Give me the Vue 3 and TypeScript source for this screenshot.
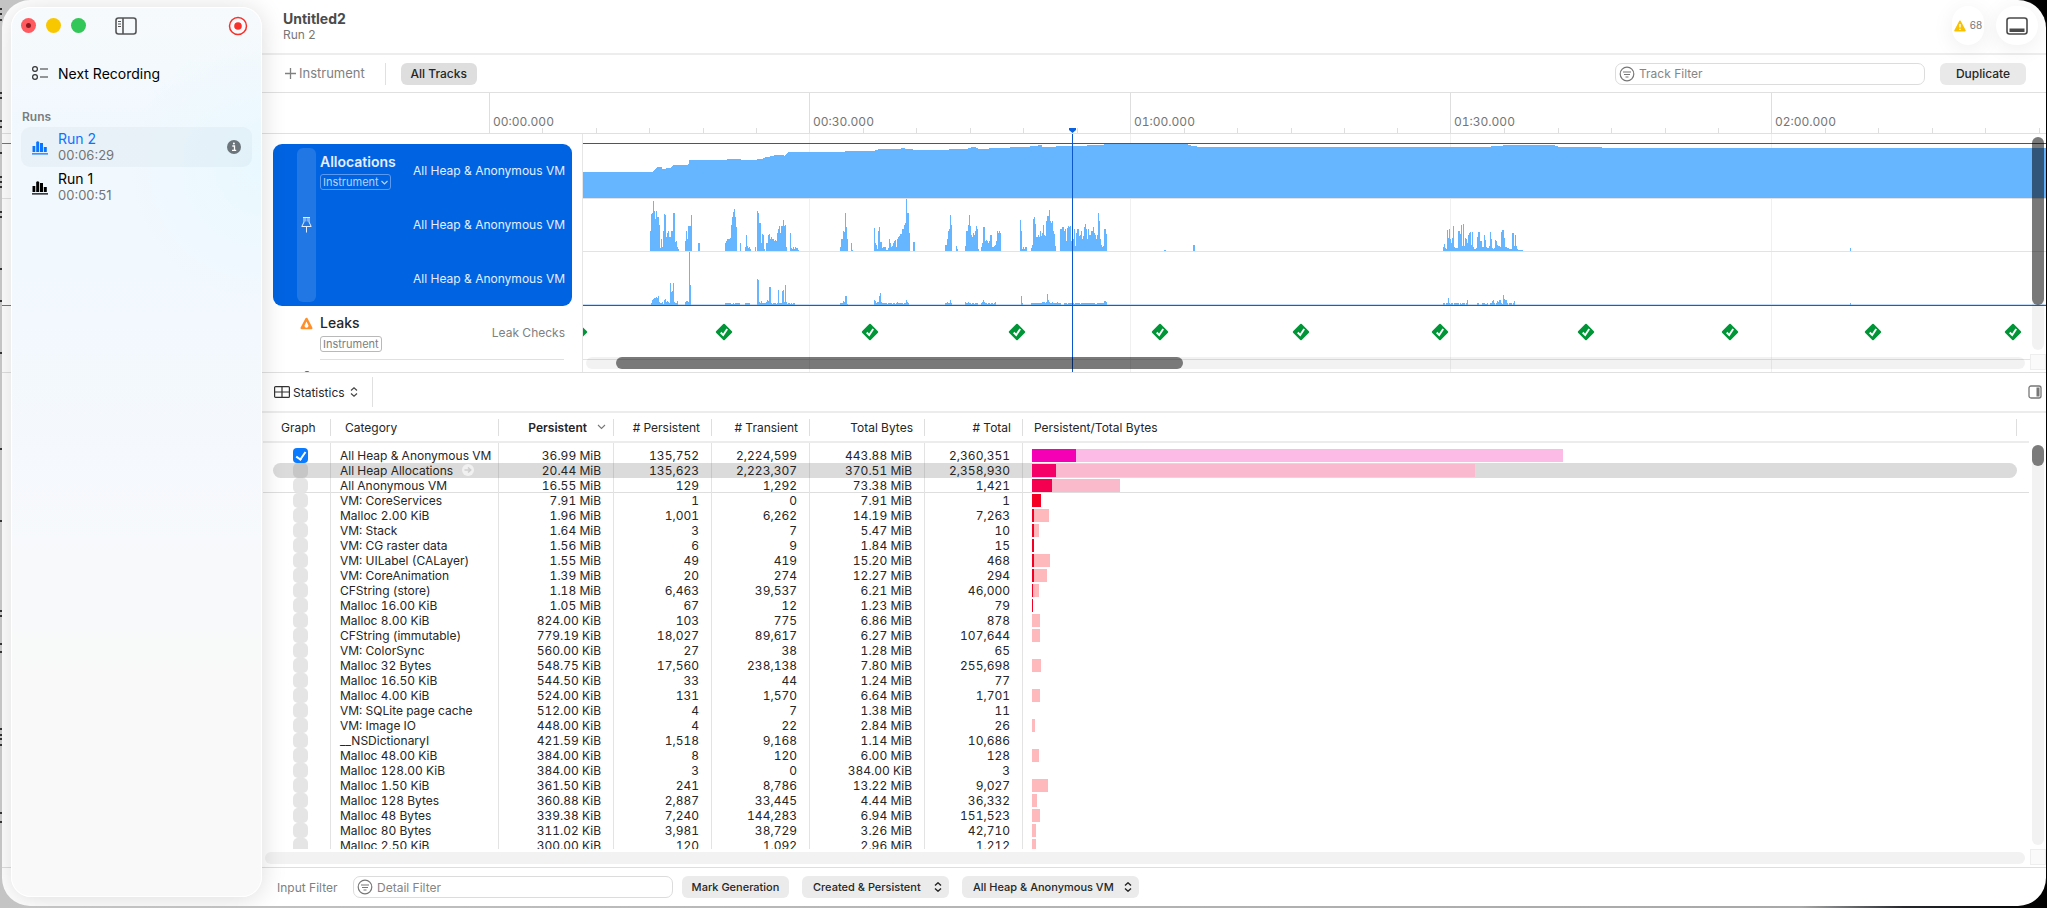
<script setup lang="ts">
import { ref } from 'vue'

interface Run { id: number; name: string; time: string }
interface Row {
  name: string
  persistent: string
  nPersistent: string
  nTransient: string
  total: string
  nTotal: string
}
type Burst = [number, number[]]

const runs: Run[] = [
  { id: 2, name: 'Run 2', time: '00:06:29' },
  { id: 1, name: 'Run 1', time: '00:00:51' },
]
const activeRun = ref(2)
const trackFilter = ref('')
const detailFilter = ref('')
const selectedRow = ref(1)

const source = `All Heap & Anonymous VM|36.99 MiB|135,752|2,224,599|443.88 MiB|2,360,351
All Heap Allocations|20.44 MiB|135,623|2,223,307|370.51 MiB|2,358,930
All Anonymous VM|16.55 MiB|129|1,292|73.38 MiB|1,421
VM: CoreServices|7.91 MiB|1|0|7.91 MiB|1
Malloc 2.00 KiB|1.96 MiB|1,001|6,262|14.19 MiB|7,263
VM: Stack|1.64 MiB|3|7|5.47 MiB|10
VM: CG raster data|1.56 MiB|6|9|1.84 MiB|15
VM: UILabel (CALayer)|1.55 MiB|49|419|15.20 MiB|468
VM: CoreAnimation|1.39 MiB|20|274|12.27 MiB|294
CFString (store)|1.18 MiB|6,463|39,537|6.21 MiB|46,000
Malloc 16.00 KiB|1.05 MiB|67|12|1.23 MiB|79
Malloc 8.00 KiB|824.00 KiB|103|775|6.86 MiB|878
CFString (immutable)|779.19 KiB|18,027|89,617|6.27 MiB|107,644
VM: ColorSync|560.00 KiB|27|38|1.28 MiB|65
Malloc 32 Bytes|548.75 KiB|17,560|238,138|7.80 MiB|255,698
Malloc 16.50 KiB|544.50 KiB|33|44|1.24 MiB|77
Malloc 4.00 KiB|524.00 KiB|131|1,570|6.64 MiB|1,701
VM: SQLite page cache|512.00 KiB|4|7|1.38 MiB|11
VM: Image IO|448.00 KiB|4|22|2.84 MiB|26
__NSDictionaryI|421.59 KiB|1,518|9,168|1.14 MiB|10,686
Malloc 48.00 KiB|384.00 KiB|8|120|6.00 MiB|128
Malloc 128.00 KiB|384.00 KiB|3|0|384.00 KiB|3
Malloc 1.50 KiB|361.50 KiB|241|8,786|13.22 MiB|9,027
Malloc 128 Bytes|360.88 KiB|2,887|33,445|4.44 MiB|36,332
Malloc 48 Bytes|339.38 KiB|7,240|144,283|6.94 MiB|151,523
Malloc 80 Bytes|311.02 KiB|3,981|38,729|3.26 MiB|42,710
Malloc 2.50 KiB|300.00 KiB|120|1,092|2.96 MiB|1,212`

const rows: Row[] = source.split('\n').map((line) => {
  const [name, persistent, nPersistent, nTransient, total, nTotal] = line.split('|')
  return { name, persistent, nPersistent, nTransient, total, nTotal }
})

function mib(text: string): number {
  const value = parseFloat(text)
  return text.endsWith('KiB') ? value / 1024 : value
}

/* Share of the bar column taken by an amount; slivers are dropped. */
function barWidth(text: string, floor: number): string {
  const value = mib(text)
  return value < floor ? '0' : `${(value * 0.1215).toFixed(3)}%`
}

/* Timeline */
const span = 320.6
const majors = ['00:00.000', '00:30.000', '01:00.000', '01:30.000', '02:00.000'].map((label, i) => ({
  label,
  x: Math.floor(487 + span * i),
}))
const minors = Array.from({ length: 29 }, (_, i) => i + 1)
  .filter((i) => i % 6 !== 0)
  .map((i) => Math.round(487 + (span / 6) * i))

const heap =
  'M-1 64V38H68L70 36L74 33H78V35L86 34L89 31H104V30H105V26H143V25H157V26H173V25H178L182 23L190 22V21H200V22L204 18H261V17H290L295 15H317V14H321V15H329V16H365V15H382L389 13H391L395 15L414 14L438 13H446V12H454V11H458V13L486 12L520 11V10H604V11L616 13H907V12H919V11H971V12L977 13H1018V14H1600V64Z'

const density: Burst[] = [
  [66, [20, 37, 38, 50, 40, 32, 40, 34, 34, 26, 3, 12, 4, 20, 37, 36, 14, 18, 20, 14, 14, 20, 20, 38, 38, 9, 10, 4, 2]],
  [101, [10, 20, 12, 25, 25, 25, 36]],
  [114, [8, 8]],
  [141, [8, 10, 12, 12, 12, 13, 26, 34, 39, 42, 34, 24]],
  [156, [8]],
  [161, [4, 16, 5, 3, 4, 2]],
  [171, [4]],
  [173, [40, 38, 28, 28, 8, 17, 16, 2]],
  [182, [8, 8, 16, 17, 12, 14, 12, 12, 10, 11, 10, 18, 22, 25, 18, 25, 25, 31, 25, 26, 4]],
  [206, [18, 3, 2, 4, 2, 4, 3, 3, 1]],
  [256, [4, 12, 12, 20, 19, 38, 24, 12]],
  [267, [8, 1]],
  [290, [23, 8, 6, 2, 20, 24, 9, 9, 3, 4, 4, 4, 1, 1, 3, 12, 8, 4, 5, 8, 10, 11, 4, 12, 14, 15, 17, 17, 22, 22, 26, 28, 52, 38, 38, 18]],
  [329, [9, 9]],
  [361, [6, 6, 12, 20, 22, 36, 26]],
  [372, [5, 2]],
  [381, [5, 20, 20, 26, 36, 25, 16, 14, 18, 16, 20, 25, 22, 2]],
  [397, [4, 8, 24, 24, 10, 11, 10, 8, 10, 16, 16, 4, 4, 5, 6, 10, 20, 18, 20, 18]],
  [436, [31, 20, 2, 4, 2, 4, 4]],
  [447, [3, 6, 32, 34, 27, 14, 14, 16, 14, 20, 15, 18, 26, 16, 15, 30, 35, 35, 41, 30, 28, 30, 20, 17, 5]],
  [476, [22, 22, 24, 24, 20, 22, 10, 23, 25, 24, 25, 10, 10, 12, 22, 5, 18, 22, 22, 15, 16, 20, 12, 15, 24, 27, 22, 12, 22, 16, 16, 20, 20, 24, 18, 16, 12, 16, 38, 30, 12, 6, 4, 5, 22, 22, 17]],
  [580, [1, 1]],
  [609, [6, 6]],
  [859, [4, 7, 3, 2, 21, 13, 22, 12, 8, 13, 25, 4, 3, 3, 3, 20, 20, 17, 26, 5, 27, 5, 13, 12, 8, 16, 18, 19, 6, 19, 4, 2, 2, 3, 14, 19, 19, 10, 10, 4, 4, 16, 11, 4, 3, 3, 5, 19, 12, 3, 2, 3, 11, 10, 6, 5, 5, 4, 19, 21, 21, 13, 4, 4, 3, 3, 2, 2, 2, 18, 18, 5, 16, 5, 2, 1, 1, 1, 1, 1]],
  [1266, [3]],
]
const growth: Burst[] = [
  [67, [2, 5, 6, 7, 7, 8, 7, 9, 3, 2, 2, 3, 1, 5, 6, 3, 4, 3, 2, 22, 13, 14, 22, 3, 2, 2, 4]],
  [101, [3, 4, 4, 3]],
  [105, [53, 20]],
  [141, [2, 2, 2, 2, 2, 2, 1, 1, 2, 1, 2, 2, 2, 2, 2]],
  [161, [2, 2, 2, 2, 2]],
  [173, [26, 25, 3, 2, 4, 2, 2, 2, 2, 3, 5, 4, 18, 18, 2, 1, 2, 2, 2, 1, 2, 15, 2, 2, 2, 14, 15, 3, 20, 3, 1, 2, 2, 1, 2, 1, 2, 2]],
  [256, [2, 2, 2, 4, 3, 9, 9, 1]],
  [290, [5, 4, 2, 3, 3, 9, 12, 3, 2, 2, 2, 2, 2, 1, 2, 2, 2, 2, 1, 2, 2, 1, 2, 3, 2, 2, 2, 2, 2, 1, 2, 2, 5, 3, 2]],
  [361, [2, 2, 3, 2, 2, 5, 2]],
  [381, [3, 2, 2, 3, 2, 2, 1, 2, 2, 1, 2, 2, 2]],
  [397, [2, 3, 5, 3, 2, 2, 1, 2, 2, 1, 2, 2, 1, 2, 3]],
  [437, [9, 2]],
  [447, [2, 2, 2, 2, 2, 2, 2, 2, 2, 2, 2, 3, 3, 3, 2, 3, 11, 5, 3, 2, 2, 3, 2, 2, 2, 2, 3, 2, 2, 2]],
  [480, [2, 2, 2, 1, 2, 2, 2, 2, 2, 2, 1, 2, 2, 2, 2, 2, 1, 2, 2, 2, 2, 2, 2, 2, 2, 2, 2, 2, 2, 2, 2, 1, 1, 2, 2, 2, 2, 2, 2, 2, 4, 4, 3]],
  [859, [2, 2, 0, 2, 2, 7, 2, 1, 2, 2, 0, 2, 2, 2, 2, 2, 0, 2, 1, 2, 2, 2, 0, 2, 5]],
  [893, [2, 2, 0, 0, 0, 2, 2, 2, 1, 1, 2, 0, 0, 2, 2, 4, 5, 2, 0, 2, 4, 3, 5, 5, 2, 1, 10, 6, 5, 5, 2, 0, 2, 2, 2, 0, 2, 4]],
  [1266, [2]],
]

function spikes(bursts: Burst[], base: number): string {
  return bursts
    .map(([x, hs]) => `M${x} ${base}` + hs.map((h) => `V${base - h}h1`).join('') + `V${base}Z`)
    .join('')
}
const densityPath = spikes(density, 117)
const growthPath = spikes(growth, 171)
const leakChecks = [-5, 140, 286, 433, 576, 717, 856, 1002, 1146, 1289, 1429]

const edgeMarks = [8, 13, 19, 92, 97, 120, 126, 152, 176, 181, 186, 211, 216, 268, 300, 352, 448, 520, 610, 615, 643, 651, 728, 734, 738, 744, 812, 821]
</script>

<template>
  <div class="desktop">
    <svg class="edge" aria-hidden="true"><rect v-for="y in edgeMarks" :key="y" x="0" :y="y" width="2" height="2" /></svg>
    <div class="window">
      <aside class="sidebar">
        <div class="chrome">
          <button class="light red" aria-label="Close"><i></i></button>
          <button class="light yellow" aria-label="Minimize"></button>
          <button class="light green" aria-label="Zoom"></button>
          <button class="icon-btn toggle" aria-label="Toggle sidebar">
            <svg width="22" height="18" viewBox="0 0 22 18" fill="none" stroke="#555" stroke-width="1.6">
              <rect x="1" y="1" width="20" height="16" rx="2.5" /><path d="M8 1v16" /><path d="M3 4.500h3M3 7h3M3 9.500h3" stroke-width="1" />
            </svg>
          </button>
          <button class="icon-btn record" aria-label="Record">
            <svg width="20" height="20" viewBox="0 0 20 20"><circle cx="10" cy="10" r="8.500" fill="none" stroke="#f9302a" stroke-width="1.500" /><circle cx="10" cy="10" r="3.800" fill="#f9302a" /></svg>
          </button>
        </div>
        <button class="next">
          <svg width="16" height="16" viewBox="0 0 16 16" fill="none" stroke="#333" stroke-width="1.200"><circle cx="3" cy="4" r="2.400" /><circle cx="3" cy="12" r="2.400" /><path d="M8 4h8M8 12h8" /></svg>
          <span>Next Recording</span>
        </button>
        <h2>Runs</h2>
        <button v-for="run in runs" :key="run.id" class="run" :class="{ active: run.id === activeRun }" @click="activeRun = run.id">
          <svg width="16" height="16" viewBox="0 0 16 16" fill="currentColor"><path d="M.500 7h2.800v6H.500zM4.200 3h3v10h-3zM8 4h3v9H8zM11.800 8h3v5h-3zM4.200 3q1.500-1.700 3 0zM0 14.200h16v1.300H0z" /></svg>
          <span class="run-text"><span class="run-name">{{ run.name }}</span><span class="run-time">{{ run.time }}</span></span>
          <svg v-if="run.id === activeRun" class="info" width="14" height="14" viewBox="0 0 14 14"><circle cx="7" cy="7" r="7" fill="#6b757b" /><path d="M5.300 6h2.200v4.200M5 10.300h4.200" fill="none" stroke="#fff" stroke-width="1.300" /><circle cx="6.900" cy="3.600" r="1" fill="#fff" /></svg>
        </button>
      </aside>

      <header class="titlebar">
        <div class="titles"><h1>Untitled2</h1><p>Run 2</p></div>
        <button class="pill issues" aria-label="68 issues">
          <svg width="12" height="12" viewBox="0 0 12 12"><path d="M6 1.200L11 10.700H1z" fill="#f8c200" stroke="#f8c200" stroke-width="1.500" stroke-linejoin="round" /><path d="M6 4v3.500M6 8.800v1.200" stroke="#fff" stroke-width="1.400" /></svg>
          <span>68</span>
        </button>
        <button class="pill panel" aria-label="Toggle detail area">
          <svg width="22" height="18" viewBox="0 0 22 18"><rect x="1" y="1" width="20" height="16" rx="2.500" fill="none" stroke="#4a4a4a" stroke-width="1.600" /><path d="M3.500 11.500h15v3.500h-15z" fill="#4a4a4a" /></svg>
        </button>
      </header>

      <div class="toolbar">
        <button class="plain"><svg width="11" height="11" viewBox="0 0 11 11" stroke="#808080" stroke-width="1.300"><path d="M5.500 0v11M0 5.500h11" /></svg>Instrument</button>
        <span class="divider"></span>
        <button class="btn tracks-btn">All Tracks</button>
        <label class="search track-search">
          <svg width="16" height="16" viewBox="0 0 16 16" fill="none" stroke="#777" stroke-width="1.200"><circle cx="8" cy="8" r="6.800" /><path d="M4 6h8M5 8.500h6M6.500 11h3" /></svg>
          <input v-model="trackFilter" type="text" placeholder="Track Filter" aria-label="Track Filter" />
        </label>
        <button class="btn duplicate">Duplicate</button>
      </div>

      <div class="ruler">
        <svg width="100%" height="40">
          <g v-for="m in majors" :key="m.label"><rect :x="m.x" y="0" width="1" height="40" fill="#dedede" /><text :x="m.x + 4" y="33">{{ m.label }}</text></g>
          <rect v-for="x in minors" :key="x" :x="x" y="35" width="1" height="5" fill="#dedede" />
          <path d="M1067 35h7v2l-3.500 3l-3.500-3z" fill="#0a62e0" />
        </svg>
      </div>

      <section class="tracks">
        <div class="bleed"></div>
        <div class="track-heads">
          <div class="alloc">
            <button class="pin" aria-label="Pin track">
              <svg width="11" height="16" viewBox="0 0 11 16" fill="none" stroke="#e4eeff" stroke-width="1"><path d="M2 .500h7M3 .500v4.500L.800 9.500h9.400L8 5V.500M5.500 9.500v6" /><path d="M4.700 1v3.500M6.300 1v3.500" stroke-width=".6" /></svg>
            </button>
            <div class="alloc-name"><strong>Allocations</strong>
              <button class="tag">Instrument<svg width="7" height="5" viewBox="0 0 7 5" fill="none" stroke="#b5d3fb" stroke-width="1.200"><path d="M.500 1l3 3l3-3" /></svg></button>
            </div>
            <ul class="lanes"><li v-for="n in 3" :key="n">All Heap &amp; Anonymous VM</li></ul>
          </div>
          <div class="leaks">
            <svg class="leak-icon" width="13" height="13" viewBox="0 0 13 13"><path d="M6.500 2L11.200 11H1.800z" fill="#ff8f2b" stroke="#ff8f2b" stroke-width="2.600" stroke-linejoin="round" /><path d="M6.500 4.500L8.300 8.200a1.900 1.900 0 1 1-3.600 0z" fill="#fff" /></svg>
            <div class="leak-name"><strong>Leaks</strong><span class="tag">Instrument</span></div>
            <span class="leak-label">Leak Checks</span>
          </div>
          <div class="next-track"><i></i></div>
        </div>
        <div class="plot">
          <svg width="100%" height="238" shape-rendering="crispEdges">
            <g fill="#f0f0f0"><rect v-for="m in majors.slice(1)" :key="m.x" :x="m.x - 581" y="0" width="1" height="238" /></g>
            <path :d="heap" transform="translate(1 0)" fill="#66b5ff" />
            <g fill="#e3e3e3"><rect y="64" width="100%" height="1" /><rect y="117" width="100%" height="1" /><rect y="225" width="100%" height="1" /></g>
            <path :d="densityPath" transform="translate(1 0)" fill="#66b5ff" />
            <rect y="9" width="100%" height="1" fill="#0a62d8" />
            <rect y="170" width="100%" height="1" fill="#c3dcf8" />
            <path :d="growthPath" transform="translate(1 0)" fill="#66b5ff" />
            <rect y="171" width="100%" height="1" fill="#0a62d8" />
            <g v-for="x in leakChecks" :key="x" :transform="`translate(${x + 1} 198)`" shape-rendering="auto">
              <path d="M0-7.200L7.200 0L0 7.200L-7.200 0z" fill="#009638" stroke="#009638" stroke-width="2" stroke-linejoin="round" />
              <path d="M-3.300.500L-.800 3L3.200-3" fill="none" stroke="#fff" stroke-width="1.900" />
            </g>
            <rect x="489" y="0" width="1" height="238" fill="#0a58cc" />
          </svg>
          <div class="h-track"><i></i></div>
          <div class="v-track"><i></i></div>
          <div class="corner"></div>
        </div>
      </section>

      <div class="detail-bar">
        <label class="popup stats">
          <svg width="16" height="12" viewBox="0 0 16 12" fill="none" stroke="#333" stroke-width="1.200"><rect x=".600" y=".600" width="14.800" height="10.800" rx="1" /><path d="M8 1v10M1 6h14" /></svg>
          <select aria-label="Detail view"><option>Statistics</option></select>
          <svg class="chev" width="8" height="10" viewBox="0 0 8 10" fill="none" stroke="#444" stroke-width="1.200"><path d="M1 3.500L4 .800L7 3.500M1 6.500L4 9.200L7 6.500" /></svg>
        </label>
        <span class="divider"></span>
        <button class="icon-btn inspector" aria-label="Toggle inspector">
          <svg width="14" height="14" viewBox="0 0 14 14"><rect x="1" y="1" width="12" height="12" rx="2" fill="none" stroke="#777" stroke-width="1.300" /><rect x="8.500" y="2.500" width="3" height="9" fill="#777" /></svg>
        </button>
      </div>

      <div class="detail">
        <div class="grid-clip">
          <table>
            <colgroup><col class="c10" /><col class="c58" /><col class="c168" /><col class="c115" /><col class="c98" /><col class="c98" /><col class="c115" /><col class="c98" /><col /><col class="c12" /></colgroup>
            <thead>
              <tr>
                <td></td><th class="g">Graph</th><th class="l cat">Category</th>
                <th class="sorted">Persistent<svg width="9" height="6" viewBox="0 0 9 6" fill="none" stroke="#777" stroke-width="1.100"><path d="M1 1l3.500 3.500L8 1" /></svg></th>
                <th># Persistent</th><th># Transient</th><th>Total Bytes</th><th># Total</th><th class="l bars">Persistent/Total Bytes</th><td></td>
              </tr>
            </thead>
            <tbody>
              <tr class="pad" aria-hidden="true"><td v-for="n in 10" :key="n"></td></tr>
              <tr v-for="(row, i) in rows" :key="row.name" :class="{ selected: i === selectedRow, last: i === 2 }" @click="selectedRow = i">
                <td></td>
                <td class="g"><input type="checkbox" :checked="i === 0" :aria-label="`Graph ${row.name}`" /></td>
                <td class="l">{{ row.name }}<svg v-if="i === selectedRow" class="go" width="12" height="12" viewBox="0 0 12 12"><circle cx="6" cy="6" r="6" fill="#f1f1f1" /><path d="M2.500 6h6M6 3.500L8.700 6L6 8.500" fill="none" stroke="#cfcfcf" stroke-width="1.600" /></svg></td>
                <td>{{ row.persistent }}</td><td>{{ row.nPersistent }}</td><td>{{ row.nTransient }}</td><td>{{ row.total }}</td><td>{{ row.nTotal }}</td>
                <td class="barcell"><div class="bar" :class="`hue${Math.min(i, 3)}`"><span class="all" :style="{ width: barWidth(row.total, 1.5) }"></span><span class="live" :style="{ width: barWidth(row.persistent, 1) }"></span></div></td>
                <td></td>
              </tr>
            </tbody>
          </table>
        </div>
        <div class="h-scroll"></div>
        <div class="v-scroll"><i></i></div>
        <div class="corner"></div>
      </div>

      <footer>
        <label for="detail-filter">Input Filter</label>
        <div class="search detail-search">
          <svg width="16" height="16" viewBox="0 0 16 16" fill="none" stroke="#777" stroke-width="1.200"><circle cx="8" cy="8" r="6.800" /><path d="M4 6h8M5 8.500h6M6.500 11h3" /></svg>
          <input id="detail-filter" v-model="detailFilter" type="text" placeholder="Detail Filter" />
        </div>
        <button class="btn mark">Mark Generation</button>
        <label class="popup boxed"><select aria-label="Lifespan"><option>Created &amp; Persistent</option></select>
          <svg class="chev" width="8" height="10" viewBox="0 0 8 10" fill="none" stroke="#222" stroke-width="1.400"><path d="M1 3.500L4 .800L7 3.500M1 6.500L4 9.200L7 6.500" /></svg></label>
        <label class="popup boxed wide"><select aria-label="Allocation type"><option>All Heap &amp; Anonymous VM</option></select>
          <svg class="chev" width="8" height="10" viewBox="0 0 8 10" fill="none" stroke="#222" stroke-width="1.400"><path d="M1 3.500L4 .800L7 3.500M1 6.500L4 9.200L7 6.500" /></svg></label>
      </footer>
    </div>
  </div>
</template>

<style>
body { margin: 0; }
</style>

<style scoped>
* { box-sizing: border-box; }
.desktop {
  position: relative; height: 100vh; padding: 0 1px 2px 2px; overflow: hidden;
  background: linear-gradient(90deg, #c4c4c4, #a8a8a8 88%, #26282c 93%, #000);
  font: 12px/15px Inter, "Liberation Sans", sans-serif; color: #262626;
}
.edge { position: absolute; left: 0; top: 0; width: 2px; height: 100%; fill: #333; }
.window {
  position: relative; height: 100%; display: flex; flex-direction: column;
  background: #fff; border-radius: 28px; overflow: hidden;
}
button, select, input { font: inherit; color: inherit; margin: 0; padding: 0; border: 0; background: none; outline: none; }
h1, h2, p, ul { margin: 0; padding: 0; }
svg { display: block; flex: none; }

.sidebar {
  position: absolute; z-index: 3; left: 9px; top: 7px; bottom: 9px; width: 251px; padding: 0 9px;
  border-radius: 20px; border: 1px solid #fff;
  background: radial-gradient(circle at 100% 18%, #e9f8ff 0, transparent 130px), linear-gradient(180deg, #f6fafc 0, #f1f8fe 14%, #f2f8fe 35%, #f7f9fc 60%, #f9f9f9 75%);
  box-shadow: 0 2px 26px rgba(0, 0, 0, .14);
}
.chrome { display: flex; align-items: center; height: 35px; }
.light { width: 15px; height: 15px; border-radius: 50%; margin-right: 10px; display: grid; place-items: center; }
.light.red { background: #ff5a5f; }
.light.red i { width: 5px; height: 5px; border-radius: 50%; background: #8b1a1f; }
.light.yellow { background: #f9c700; }
.light.green { background: #33c658; }
.toggle { margin-left: 19px; }
.record { margin-left: auto; margin-right: 4px; }
.next { display: flex; align-items: center; gap: 10px; height: 30px; margin-top: 15px; padding-left: 11px; font-size: 14px; color: #000; }
.sidebar h2 { font-size: 12px; font-weight: 600; line-height: 16px; color: #777d82; margin: 21px 0 2px 1px; }
.run { display: flex; align-items: center; width: 100%; height: 40px; padding: 0 11px; text-align: left; border-radius: 9px; color: #000; }
.run.active { background: rgba(0, 40, 60, .03); }
.run.active svg:first-child, .run.active .run-name { color: #0a74ff; }
.run-text { flex: 1; margin-left: 10px; display: flex; flex-direction: column; }
.run-name { font-size: 14px; line-height: 16px; }
.run-time { font-size: 13px; line-height: 16px; color: #707579; }

.titlebar { flex: none; display: flex; height: 55px; margin-left: 260px; padding: 6px 8px 0 21px; border-bottom: 2px solid #ededed; }
.titles { flex: 1; }
h1 { font-size: 14px; line-height: 18px; margin-top: 4px; font-weight: 700; color: #4b4b4b; }
.titles p { line-height: 14px; color: #777; }
.pill { display: flex; align-items: center; justify-content: center; height: 39px; border-radius: 20px; background: #fff; box-shadow: 0 4px 22px rgba(0, 0, 0, .07); color: #777; }
.issues { width: 32px; gap: 4px; font-size: 10px; margin-right: 12px; }
.panel { width: 42px; }

.toolbar { flex: none; display: flex; align-items: center; height: 38px; margin-left: 260px; padding: 0 20px 0 23px; border-bottom: 1px solid #e0e0e0; }
.plain { display: flex; align-items: center; gap: 3px; font-size: 13px; color: #808080; }
.divider { width: 1px; height: 22px; background: #e0e0e0; }
.toolbar .divider { margin: 0 15px 0 20px; }
.btn { height: 22px; padding: 0 11px; border-radius: 6px; background: #ebebeb; font-weight: 500; }
.tracks-btn { width: 76px; padding: 0; background: #dedede; }
.duplicate { width: 86px; margin-left: 15px; background: #e9e9e9; }
.search { display: flex; align-items: center; gap: 4px; height: 22px; padding: 0 5px 0 3px; border: 1px solid #dcdcdc; border-radius: 7px; background: #fff; }
.search input { flex: 1; min-width: 0; width: 100%; }
.search input::placeholder { color: #858585; opacity: 1; }
.track-search { width: 310px; margin-left: auto; }

.ruler { flex: none; height: 41px; border-bottom: 1px solid #e0e0e0; }
.ruler text { font-size: 12px; font-variant-numeric: tabular-nums; fill: #757575; }

.tracks { flex: none; position: relative; display: flex; height: 239px; border-bottom: 1px solid #e0e0e0; }
.bleed { position: absolute; left: 0; top: 9px; width: 9px; height: 163px; border: solid #3583e6; border-width: 1px 0; background: linear-gradient(#e3e3e3, #e3e3e3) 0 54px / 100% 1px no-repeat; }
.track-heads { width: 581px; flex: none; padding: 10px 10px 0 271px; border-right: 1px solid #e6e6e6; overflow: hidden; }
.alloc { display: flex; height: 162px; border-radius: 9px; background: #0063e1; color: #e4eeff; padding: 4px 7px 4px 24px; }
.pin { width: 19px; border-radius: 6px; background: rgba(255, 255, 255, .13); display: grid; place-items: center; }
.alloc-name, .leak-name { display: flex; flex-direction: column; align-items: flex-start; }
.alloc-name { flex: 1; margin-left: 4px; padding-top: 5px; gap: 3px; }
strong { font-size: 14px; line-height: 18px; font-weight: 600; }
.tag { display: flex; align-items: center; gap: 2px; height: 16px; padding: 0 2px; border: 1px solid #5a9af0; border-radius: 3px; font-size: 11px; color: #b5d3fb; }
.lanes { list-style: none; margin: -4px 0; white-space: nowrap; }
.lanes li { height: 54px; line-height: 54px; }
.leaks { display: flex; height: 54px; margin: 0 -2px 0 27px; padding-top: 8px; position: relative; }
.leaks::after { content: ""; position: absolute; left: 20px; right: 10px; bottom: 0; height: 1px; background: #e0e0e0; }
.leak-icon { margin: 3px 7px 0 0; }
.leak-name { flex: 1; gap: 4px; }
.leak-name strong { font-weight: 500; }
.leak-name .tag { border-color: #b9b9b9; color: #808080; }
.leak-label { padding: 11px 9px 0 0; color: #808080; }
.next-track { height: 12px; padding: 11px 0 0 31px; }
.next-track i { display: block; width: 6px; height: 6px; border-radius: 3px; background: #0a74d8; }
.plot { flex: 1; position: relative; overflow: hidden; }
.h-track, .v-track { position: absolute; background: rgba(0, 0, 0, .05); border-radius: 6px; }
.h-track { left: 3px; right: 21px; bottom: 3px; height: 12px; }
.h-track i { display: block; width: 39.4%; margin-left: 2.1%; height: 12px; border-radius: 6px; background: rgba(0, 0, 0, .5); }
.v-track { right: 2px; top: 3px; width: 12px; height: 213px; }
.v-track i { display: block; height: 168px; border-radius: 6px; background: rgba(0, 0, 0, .5); }
.corner { position: absolute; right: 0; bottom: 2px; width: 16px; height: 16px; background: #fafafa; border: 1px solid #eee; }

.detail-bar { flex: none; display: flex; align-items: center; height: 40px; margin-left: 260px; padding: 0 4px 0 12px; border-bottom: 2px solid #ececec; }
.detail-bar .divider { height: 30px; margin-left: 14px; }
.inspector { margin-left: auto; }
.popup { display: flex; align-items: center; }
.popup select { appearance: none; font-weight: 500; }
.popup.stats select { font-weight: 400; }
.stats { gap: 3px; }
.stats .chev { margin-left: 2px; }

.detail { flex: 1; min-height: 0; position: relative; display: flex; flex-direction: column; margin-left: 261px; font-variant-numeric: tabular-nums; }
.grid-clip { flex: 1; min-height: 0; overflow: hidden; margin-right: 17px; }
table { width: 100%; table-layout: fixed; border-collapse: separate; border-spacing: 0; }
.c10 { width: 10px; } .c12 { width: 12px; } .c58 { width: 58px; } .c98 { width: 98px; } .c115 { width: 115px; } .c168 { width: 168px; }
thead th, thead td { height: 30px; padding: 0 12px 0 0; border-bottom: 2px solid #ececec; font-weight: 400; text-align: right; }
thead th { background: linear-gradient(#dedede, #dedede) right 6px / 1px 17px no-repeat; }
thead th.g { text-align: left; padding: 0 0 0 8px; }
thead th.l { text-align: left; padding-left: 14px; }
thead th.bars { padding-left: 11px; }
thead th.sorted { font-weight: 600; padding-right: 8px; }
.sorted svg { display: inline-block; margin: 0 0 2px 10px; }
tbody td { height: 15px; padding: 0 12px 0 0; border-right: 1px solid #e3e3e3; text-align: right; vertical-align: top; white-space: nowrap; line-height: 15px; }
tbody .pad td { height: 5px; }
tbody td:first-child, tbody td:nth-child(9), tbody td:last-child { border-right: 0; padding: 0; }
tbody td.l { text-align: left; padding: 0 0 0 9px; }
tbody td.g { padding: 0 0 0 20px; text-align: left; }
.go { display: inline-block; vertical-align: top; margin: 1px 0 0 9px; }
.selected td:not(:first-child):not(:last-child) { background: #dbdbdb; border-color: #c6c6c6; }
.selected td.g { border-radius: 8px 0 0 8px; }
.selected td.barcell { border-radius: 0 8px 8px 0; }
.last td { background: linear-gradient(#dedede, #dedede) 0 14px / 100% 1px no-repeat; }
input[type="checkbox"] { appearance: none; display: block; position: relative; width: 15px; height: 15px; border-radius: 5px; background: #e5e5e5; }
.selected input[type="checkbox"] { background: #c6c6c6; }
input[type="checkbox"]:checked { background: #0a7aff; border-radius: 4px; }
input[type="checkbox"]:checked::after { content: ""; box-sizing: border-box; position: absolute; left: 5px; top: 2px; width: 6px; height: 10px; border: solid #fff; border-width: 0 2px 2px 0; transform: rotate(35deg); }
tbody td.barcell { padding: 1px 0 0 9px; }
.bar { position: relative; height: 13px; }
.bar span { position: absolute; left: 0; top: 0; height: 13px; }
.hue0 .all { background: #fcbbe6; } .hue0 .live { background: #f500b5; }
.hue1 .all { background: #fbb9cf; } .hue1 .live { background: #f50068; }
.hue2 .all { background: #fbb9cc; } .hue2 .live { background: #f50050; }
.hue3 .all { background: #fdb9bb; } .hue3 .live { background: #f50025; }
.h-scroll { flex: none; height: 12px; margin: 3px 21px 3px 2px; border-radius: 6px; background: #f2f2f2; }
.v-scroll { position: absolute; right: 2px; top: 32px; bottom: 22px; width: 12px; border-radius: 6px; background: #f2f2f2; }
.v-scroll i { display: block; height: 21px; border-radius: 6px; background: #7b7b7b; }

footer { flex: none; display: flex; align-items: center; height: 39px; padding-left: 275px; border-top: 1px solid #dedede; }
footer > label:first-child { width: 76px; color: #808080; }
footer .search { margin-right: 9px; }
.detail-search { width: 320px; }
.mark { width: 107px; padding: 0; font-size: 11px; }
.boxed { width: 147px; height: 22px; margin-left: 13px; padding: 0 7px 0 11px; border-radius: 6px; background: #ebebeb; font-size: 11px; }
.boxed select { flex: 1; }
.wide { width: 177px; }
</style>
